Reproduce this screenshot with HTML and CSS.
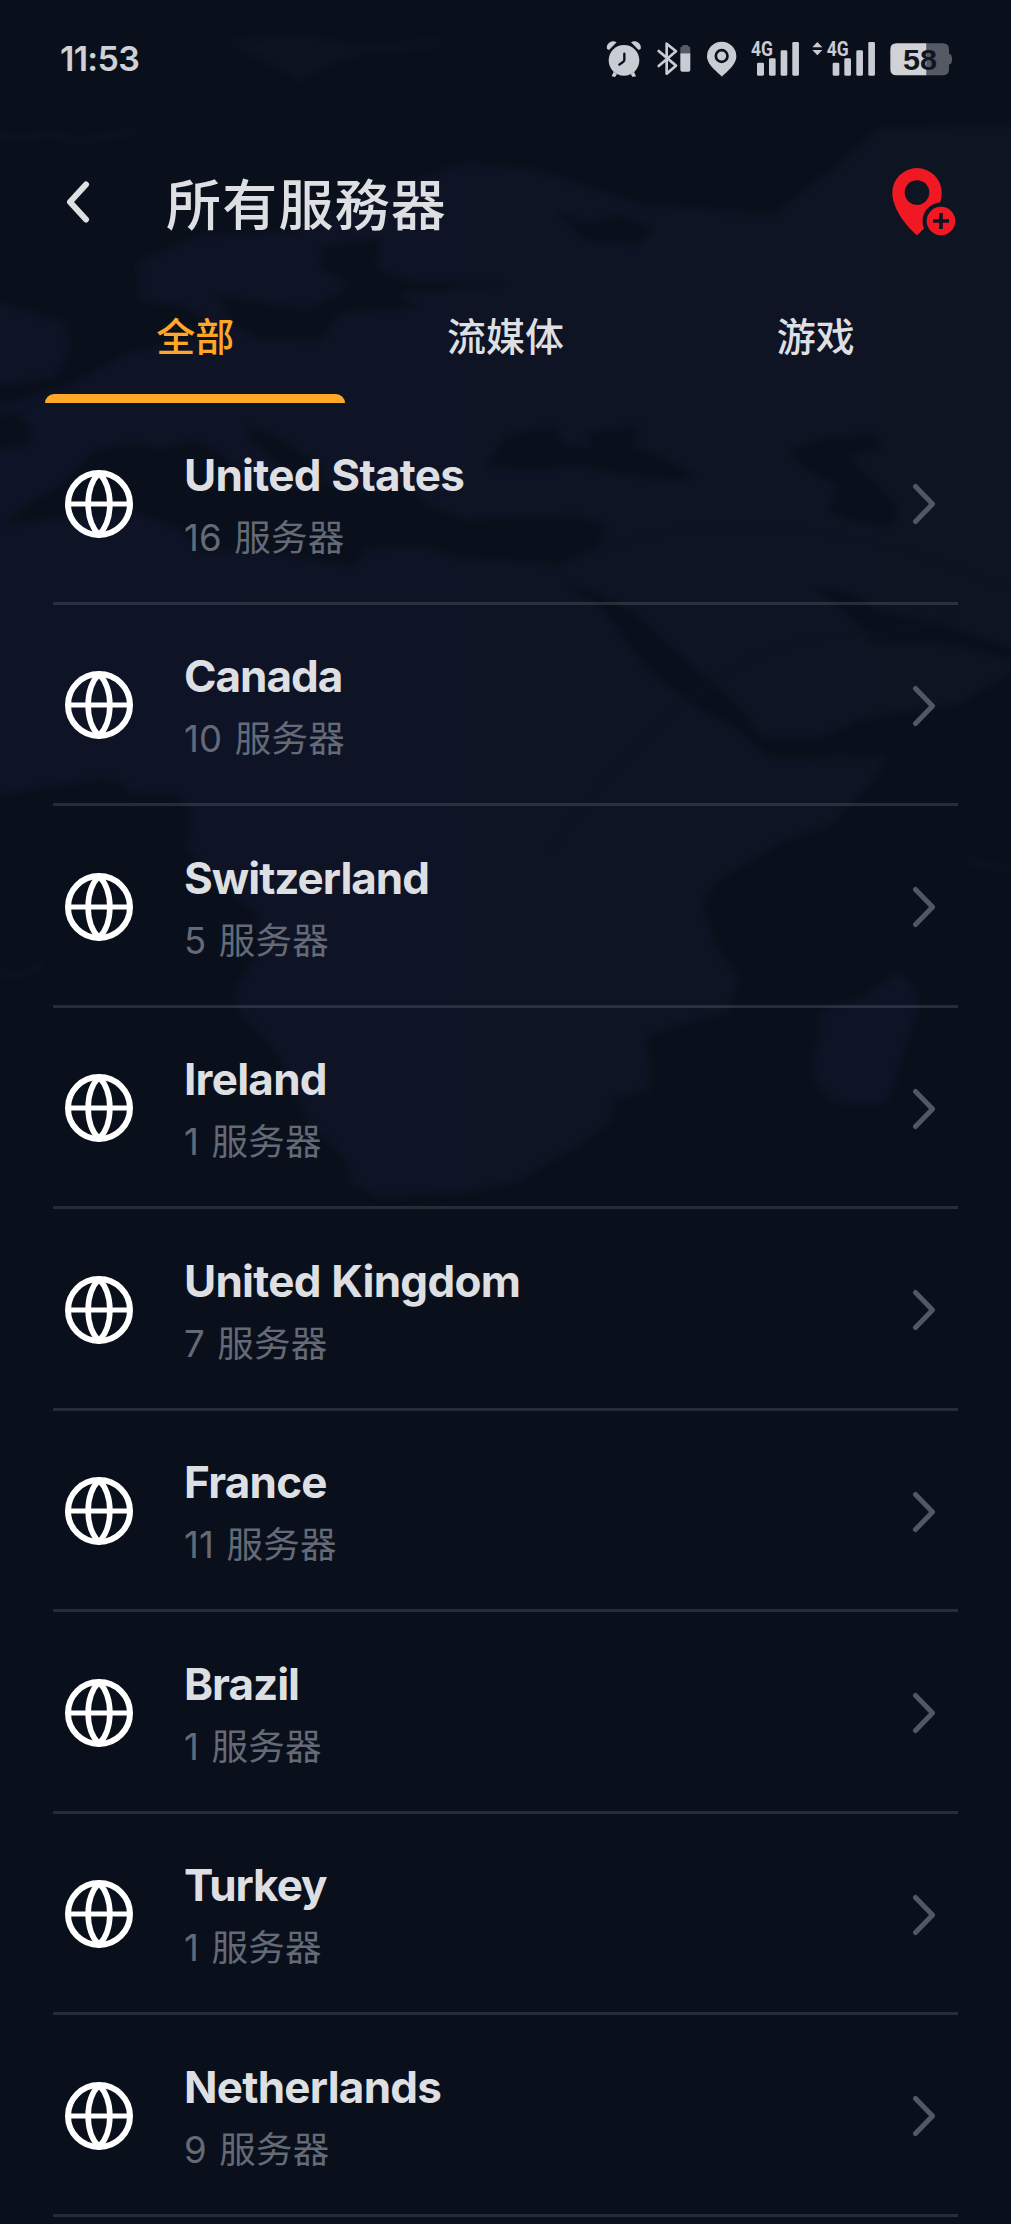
FILE: index.html
```html
<!DOCTYPE html>
<html lang="zh-CN">
<head>
<meta charset="utf-8">
<title>所有服務器</title>
<link rel="stylesheet" href="styles.css">
</head>
<body>
<svg class="defs" aria-hidden="true">
  <symbol id="globe" viewBox="0 0 68 68">
    <g fill="none" stroke="#fff" stroke-width="6">
      <circle cx="34" cy="34" r="31"/>
      <path d="M3 34H65" stroke-width="5.2"/>
      <path d="M34 3C19.500 18 19.500 50 34 65C48.500 50 48.500 18 34 3Z" stroke-width="5.6"/>
    </g>
  </symbol>
  <symbol id="chevron" viewBox="0 0 24 42">
    <path d="M3.500 3.500L20.500 21L3.500 38.500" fill="none" stroke="#525764" stroke-width="5" stroke-linecap="round" stroke-linejoin="round"/>
  </symbol>
</svg>

<div class="screen">
  <svg class="map" viewBox="0 0 1011 2224" aria-hidden="true">
    <defs>
      <linearGradient id="shade" x1="0" y1="0" x2="1" y2="0">
        <stop offset="0" stop-color="#0e1427"/>
        <stop offset=".6" stop-color="#0e1424"/>
        <stop offset="1" stop-color="#0e1522"/>
      </linearGradient>
      <filter id="soft" x="-5%" y="-5%" width="110%" height="110%" color-interpolation-filters="sRGB"><feGaussianBlur stdDeviation="3"/></filter>
    </defs>
    <g filter="url(#soft)">
      <path fill="url(#shade)" d="M-10 408L64 388L129 353L220 332L185 306L140 300L138 262L200 236L290 232L350 202L419 179L464 163L535 170L645 205L774 214L838 165L877 129L1020 124V668L960 703L893 713L860 720L813 740L763 738L737 703L767 757L806 756L886 757L870 784L832 824L780 842L716 882L703 904L716 945L738 980L728 1012L670 1027L645 1038L651 1070L648 1090L612 1099L612 1119L580 1145L516 1181L471 1192L380 1197L351 1183L348 1163L309 1123L277 1052L239 1012L235 989L261 949L258 913L213 878L187 846L193 811L174 794L132 794L122 782L97 779L-10 796Z"/>
      <path fill="#0e1426" d="M-10 300L30 312L66 324L70 350L55 378L-10 386ZM897 972C915 985 922 1000 914 1020L890 1095C880 1108 850 1107 830 1098C808 1080 810 1060 821 1035C812 1010 835 1002 860 1000Z"/>
      <path fill="#0c1321" d="M225 40L300 34L360 45L455 38L430 48L360 55L330 66L300 82L265 62Z"/>
      <g fill="#0a101b">
        <path d="M380 237L322 246L320 268L348 286L309 308L250 300L215 292L232 325L260 340L322 341L340 314L419 308L400 294L503 286L503 281L413 281L378 268Z"/>
        <path d="M555 210L590 222L620 214L655 228L640 246L585 242Z"/>
        <path d="M-10 415L20 412L33 430L28 448L-10 450ZM0 527L27 503L60 485L92 450L130 442L161 447L191 440L214 447L240 468L268 490L321 480L370 492L400 478L430 505L464 518L580 515L606 525L600 548L561 567L528 563L459 560L425 547L367 550L356 567L306 560L260 550L199 553L180 530L130 512L54 520Z"/>
        <path d="M245 425L270 432L325 466L318 490L280 468L248 438Z"/>
        <path d="M484 469L503 437L530 428L555 426L567 444L590 446L585 432L640 424L635 446L665 458L697 475L677 482L625 476L580 467L540 470Z"/>
        <path d="M790 450L823 437L877 433L883 450L850 457L877 483L900 507L893 527L853 523L827 510L837 487L800 467Z"/>
        <path d="M560 583L593 590L633 610L687 660L737 703L767 742L820 742V760L767 757L733 727L693 707L647 670L600 607Z"/>
        <path d="M813 587L847 590L880 610L940 623L1020 650V664L960 647L920 643L870 643L860 627Z"/>
      </g>
      <g fill="none" stroke="#0c1220" stroke-width="3">
        <path d="M548 856C600 780 650 720 735 668S880 650 960 610M570 560C700 505 850 520 1011 590"/>
        <path stroke="#0f1624" d="M0 135C30 145 40 127 60 136S100 137 135 131M0 972C18 980 30 970 42 966M968 860C985 863 995 872 1011 866"/>
      </g>
    </g>
  </svg>

  <header class="status">
    <span class="clock">11:53</span>
    <div class="status-icons">
      <svg class="alarm" viewBox="48 32 108 110">
        <g fill="#c9ccd3">
          <path d="M51 56A19 19 0 0 1 80 36L57 59ZM152 56A19 19 0 0 0 123 36L146 59Z"/>
          <circle cx="102" cy="90" r="46"/>
          <path d="M71 124L81 132L75 140L65 138ZM132 124L122 132L128 140L138 138Z"/>
        </g>
        <path d="M103 70V88Q103 92 99 95L88 103" fill="none" stroke="#0a101b" stroke-width="7" stroke-linecap="round"/>
      </svg>
      <svg class="bluetooth" viewBox="203 34 102 106">
        <path d="M208 64L260 108L232 132V42L260 65L208 109" fill="none" stroke="#c9ccd3" stroke-width="8" stroke-linejoin="round" stroke-linecap="round"/>
        <path d="M273 70V56Q273 50 279 50H280V46H296V50H298Q303 50 303 56V70Z" fill="#555a66"/>
        <path d="M273 71H303V120Q303 126 297 126H279Q273 126 273 120Z" fill="#c9ccd3"/>
      </svg>
      <svg class="place" viewBox="353 34 90 108">
        <path d="M398 141C391 132 353 108 353 80A44 44 0 0 1 441 80C441 108 405 132 398 141Z" fill="#c9ccd3"/>
        <circle cx="397" cy="79" r="17.500" fill="none" stroke="#0a101b" stroke-width="8"/>
      </svg>
      <svg class="signal" viewBox="483 34 145 106">
        <text class="network" x="483" y="79" textLength="66" lengthAdjust="spacingAndGlyphs">4G</text>
        <g fill="#c9ccd3"><rect x="501" y="99" width="21" height="39" rx="4"/><rect x="537" y="86" width="20" height="52" rx="4"/><rect x="572" y="62" width="20" height="76" rx="4"/><rect x="607" y="37" width="20" height="101" rx="4"/></g>
      </svg>
      <svg class="signal-data" viewBox="667 34 190 106">
        <path d="M668 53L683 37L698 53ZM668 61L683 77L698 61Z" fill="#c9ccd3"/>
        <text class="network" x="711" y="79" textLength="66" lengthAdjust="spacingAndGlyphs">4G</text>
        <g fill="#c9ccd3"><rect x="729" y="99" width="20" height="39" rx="4"/><rect x="764" y="86" width="20" height="52" rx="4"/><rect x="800" y="62" width="20" height="76" rx="4"/><rect x="836" y="37" width="20" height="101" rx="4"/></g>
      </svg>
      <svg class="battery" viewBox="902 41 188 98">
        <path d="M1011 42H1060Q1079 42 1079 61V74H1082Q1088 76 1088 90T1082 105H1079V119Q1079 138 1060 138H1011Z" fill="#555963"/>
        <path d="M1011 42H922Q903 42 903 61V119Q903 138 922 138H1011Z" fill="#d0d2d8"/>
        <text class="charge" x="941" y="121" textLength="102" lengthAdjust="spacingAndGlyphs">58</text>
      </svg>
    </div>
  </header>

  <div class="titlebar">
    <svg class="back" viewBox="0 0 24 42"><path d="M20 3.500L4 21L20 38.500" fill="none" stroke="#dedfe3" stroke-width="6" stroke-linecap="round" stroke-linejoin="round"/></svg>
    <h1>所有服務器</h1>
    <svg class="add-pin" viewBox="0 0 64 68">
      <defs><mask id="cut"><rect width="64" height="68" fill="#fff"/><circle cx="25" cy="24.500" r="12.300" fill="#000"/><circle cx="49" cy="53" r="18.500" fill="#000"/></mask></defs>
      <path mask="url(#cut)" d="M25 0A24.700 24.700 0 0 0 .3 24.700C.3 39 12 56 25 67.300C38 56 49.700 39 49.700 24.700A24.700 24.700 0 0 0 25 0Z" fill="#f01923"/>
      <circle cx="49" cy="53" r="14.300" fill="#f01923"/>
      <path d="M49 45V61M41 53H57" stroke="#0d1323" stroke-width="3.600"/>
    </svg>
  </div>

  <nav class="tabs">
    <span class="tab active">全部</span>
    <span class="tab">流媒体</span>
    <span class="tab">游戏</span>
  </nav>

  <main class="list">
    <div class="row"><svg class="globe"><use href="#globe"/></svg><div class="info"><div class="name">United States</div><div class="count">16 服务器</div></div><svg class="chevron"><use href="#chevron"/></svg></div>
    <div class="row"><svg class="globe"><use href="#globe"/></svg><div class="info"><div class="name tight">Canada</div><div class="count">10 服务器</div></div><svg class="chevron"><use href="#chevron"/></svg></div>
    <div class="row"><svg class="globe"><use href="#globe"/></svg><div class="info"><div class="name tight">Switzerland</div><div class="count">5 服务器</div></div><svg class="chevron"><use href="#chevron"/></svg></div>
    <div class="row"><svg class="globe"><use href="#globe"/></svg><div class="info"><div class="name">Ireland</div><div class="count">1 服务器</div></div><svg class="chevron"><use href="#chevron"/></svg></div>
    <div class="row"><svg class="globe"><use href="#globe"/></svg><div class="info"><div class="name">United Kingdom</div><div class="count">7 服务器</div></div><svg class="chevron"><use href="#chevron"/></svg></div>
    <div class="row"><svg class="globe"><use href="#globe"/></svg><div class="info"><div class="name">France</div><div class="count">11 服务器</div></div><svg class="chevron"><use href="#chevron"/></svg></div>
    <div class="row"><svg class="globe"><use href="#globe"/></svg><div class="info"><div class="name tight">Brazil</div><div class="count">1 服务器</div></div><svg class="chevron"><use href="#chevron"/></svg></div>
    <div class="row"><svg class="globe"><use href="#globe"/></svg><div class="info"><div class="name tight">Turkey</div><div class="count">1 服务器</div></div><svg class="chevron"><use href="#chevron"/></svg></div>
    <div class="row"><svg class="globe"><use href="#globe"/></svg><div class="info"><div class="name">Netherlands</div><div class="count">9 服务器</div></div><svg class="chevron"><use href="#chevron"/></svg></div>
  </main>
</div>
</body>
</html>
```
FILE: styles.css
```css
* { box-sizing: border-box; }
html, body { margin: 0; background: #0a101b; }
body { font-family: Inter, "Noto Sans CJK SC", sans-serif; color: #dedfe3; }
svg { display: block; flex: none; }
.defs { position: absolute; width: 0; height: 0; }
.screen { position: relative; isolation: isolate; width: 1011px; height: 2224px; overflow: hidden; display: flex; flex-direction: column; }
.map { position: absolute; inset: 0; width: 1011px; height: 2224px; z-index: -1; }

.status { height: 118px; padding: 0 58px 0 60px; display: flex; align-items: center; justify-content: space-between; }
.clock { font-size: 34px; font-weight: 600; line-height: 40px; letter-spacing: -.7px; color: #cfd1d7; }
.status-icons { display: flex; align-items: center; }
.status-icons svg { overflow: visible; }
.alarm { width: 36px; height: 36.700px; margin-right: 15.700px; }
.bluetooth { width: 34px; height: 35.300px; margin-right: 16px; }
.place { width: 30px; height: 36px; margin-right: 13.300px; }
.signal { width: 48.300px; height: 35.300px; margin-right: 13px; }
.signal-data { width: 63.300px; height: 35.300px; margin-right: 15px; }
.battery { width: 62.700px; height: 32.700px; }
.network { font: 700 60px Roboto, sans-serif; fill: #c9ccd3; }
.charge { font: 700 86px "Liberation Sans", sans-serif; fill: #10151f; }

.titlebar { height: 168px; padding: 0 55px 0 66px; display: flex; align-items: center; }
.back { width: 24px; height: 42px; }
h1 { flex: 1; margin: -2px 0 0 76px; font: 500 55px/80px "Noto Sans CJK TC", sans-serif; letter-spacing: 1.200px; }
.add-pin { width: 64px; height: 68px; }

.tabs { height: 117px; padding: 0 40px; display: grid; grid-template-columns: repeat(3, 1fr); }
.tab { display: flex; flex-direction: column; align-items: center; padding-top: 22px; font: 500 39px/52px "Noto Sans CJK SC", sans-serif; }
.active { color: #ffa726; }
.active::after { content: ""; width: 300px; height: 9px; margin-top: auto; border-radius: 9px 9px 0 0; background: #ffa726; }

.list { padding: 0 53px; }
.row { height: 201.500px; padding: 0 22px 0 12px; border-bottom: 3px solid rgba(255, 255, 255, .12); display: flex; align-items: center; }
.globe { width: 68px; height: 68px; margin-top: 3px; }
.chevron { width: 24px; height: 42px; margin-top: 4px; }
.info { flex: 1; margin: 3px 0 0 51px; }
.name { font-size: 44px; line-height: 60px; font-weight: 700; letter-spacing: -.750px; word-spacing: 1px; }
.tight { letter-spacing: -1px; }
.count { font-size: 36.500px; line-height: 50px; margin-top: 8px; font-weight: 400; letter-spacing: .2px; word-spacing: 2px; color: #656a77; }
```
